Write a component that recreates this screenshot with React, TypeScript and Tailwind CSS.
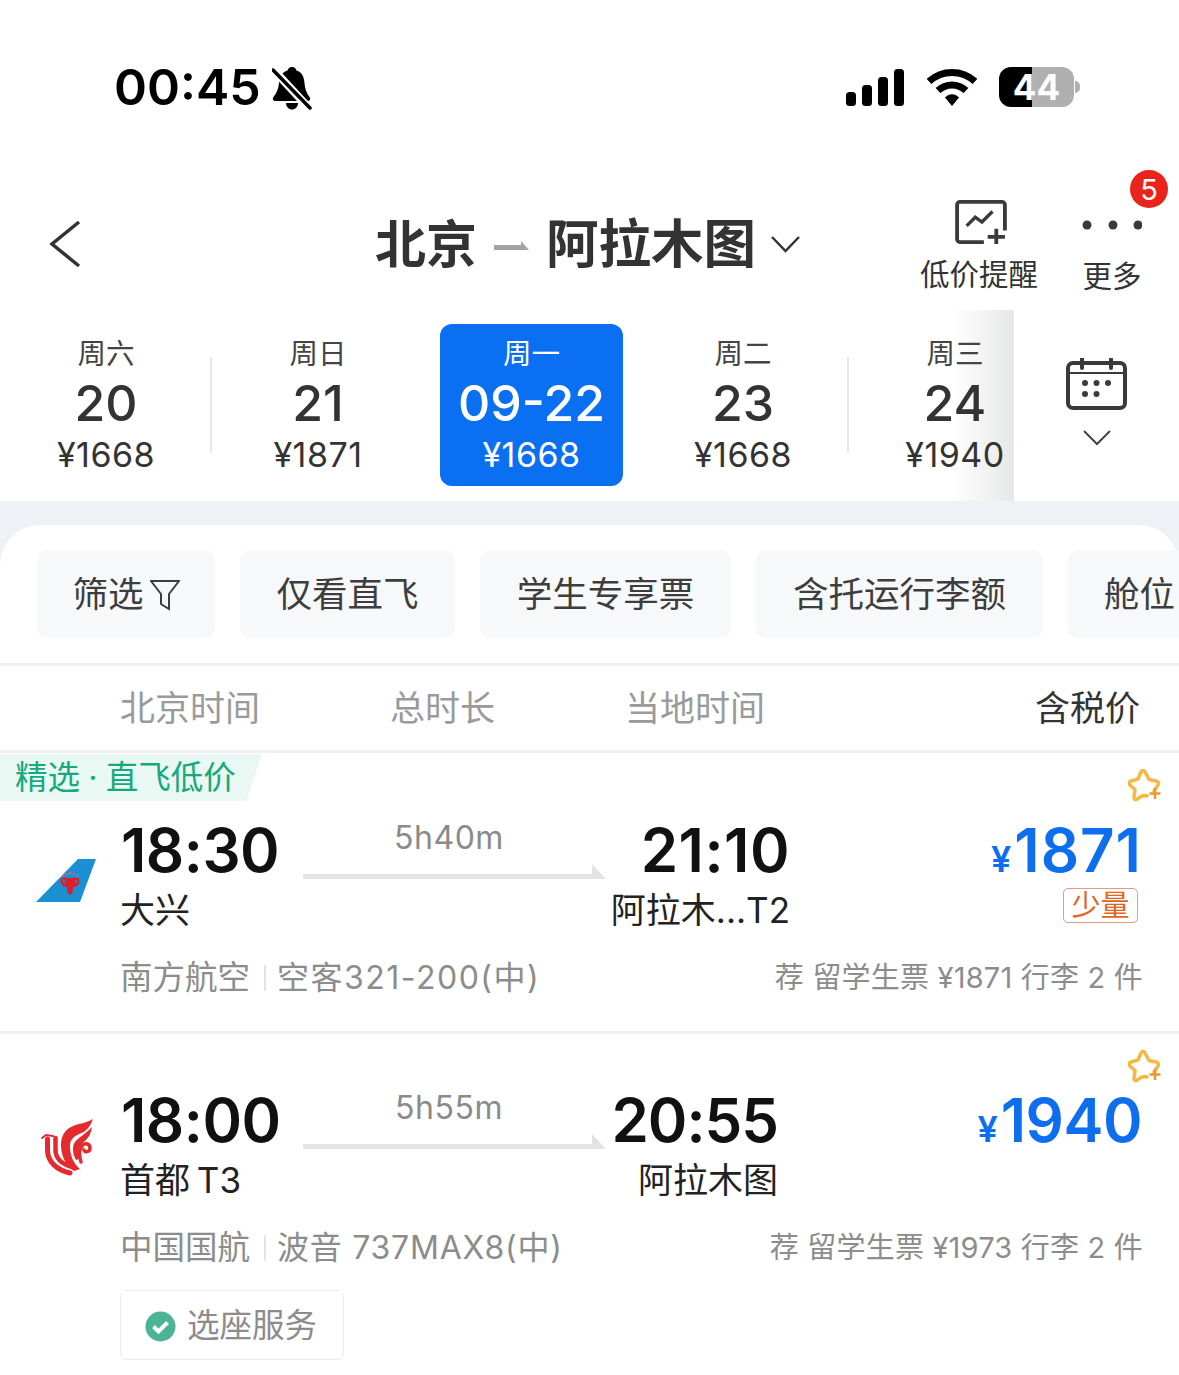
import React from "react";

function BellOff() {
  return (
    <svg width="40" height="43" viewBox="0 0 40 43" className="ml-[11px]">
      <path d="M20 0c3 0 4 2 4.500 3.500C30 5 32 10 32.500 16c.5 6 2 10 5 14 1.500 2 .5 4-2 4H4c-3 0-4-2-2.500-4 3-4 5-8 5.500-14C7.500 10 10 5 15.500 3.500 16 2 17 0 20 0z" fill="#000" />
      <path d="M14 36h12c0 4-3 6.500-6 6.500S14 40 14 36z" fill="#000" />
      <path d="M-2 -1L36 40" stroke="#fff" strokeWidth="8" />
      <path d="M1 3L38 41" stroke="#000" strokeWidth="3.500" strokeLinecap="round" />
    </svg>
  );
}

function Signal() {
  return (
    <svg width="58" height="37" viewBox="0 0 58 37">
      <rect x="0" y="23" width="10" height="14" rx="3.500" fill="#000" />
      <rect x="16" y="16" width="10" height="21" rx="3.500" fill="#000" />
      <rect x="32" y="8" width="10" height="29" rx="3.500" fill="#000" />
      <rect x="48" y="0" width="10" height="37" rx="3.500" fill="#000" />
    </svg>
  );
}

function Wifi() {
  return (
    <svg width="50" height="37" viewBox="0 0 50 37">
      <path d="M2 12.500C15 .5 35 .5 48 12.500" stroke="#000" strokeWidth="7" fill="none" />
      <path d="M11 21.500C19 14 31 14 39 21.500" stroke="#000" strokeWidth="7" fill="none" />
      <path d="M18 28.500C22 24 28 24 32 28.500L25 37z" fill="#000" />
    </svg>
  );
}

function Battery() {
  return (
    <div className="ml-[22px] mt-[-2px] flex h-[40px] w-[82px] items-center">
      <div className="flex h-[40px] w-[75px] items-center justify-center rounded-[12px] bg-[linear-gradient(90deg,#000_44%,#b0b0b0_44%)] text-[35px] font-bold leading-none text-white">
        44
      </div>
      <div className="ml-[1px] h-[12px] w-[5px] rounded-r-full bg-[#b0b0b0]" />
    </div>
  );
}

function DateCell({ w, d, p, sel }: { w: string; d: string; p: string; sel?: boolean }) {
  const box = sel
    ? "ml-[16px] mr-[14px] w-[183px] rounded-[12px] bg-[#0b6ff2] text-white"
    : "w-[212px] text-[#333333]";
  return (
    <div className={"relative flex h-[162px] shrink-0 flex-col items-center " + box}>
      <div className={"mt-[12px] h-[36px] text-[28.500px] leading-[36px] " + (sel ? "text-white" : "text-[#444444]")}>{w}</div>
      <div className="h-[62px] text-[50px] font-medium leading-[62px]">{d}</div>
      <div className="-mt-[2px] text-[34px] leading-[46px] tracking-[0.500px]">{p}</div>
    </div>
  );
}

function Sep() {
  return <div className="-mx-[1px] mt-[33px] h-[96px] w-[2px] shrink-0 -translate-x-[1px] bg-[#e8e8e8]" />;
}

function Chip({ children, w }: { children: React.ReactNode; w: string }) {
  return (
    <div className={"flex h-[88px] shrink-0 items-center justify-center rounded-[10px] bg-[#f7f8fa] pt-[2px] text-[35.500px] text-[#3d3d3d] " + w}>
      {children}
    </div>
  );
}

function Star() {
  return (
    <svg width="36" height="36" viewBox="0 0 36 36">
      <path
        d="M26 23L30 17C31 15 30 13 28 13L21 11.500L17 4C16 2 14 2 13 4L10 11L3 13C1 13.500 1 15.500 2 17L7 21.500L6 29C6 32 8 32 10 30.500C13 28 16 27 19 28"
        fill="none"
        stroke="#f6b843"
        strokeWidth="3.500"
        strokeLinecap="round"
        strokeLinejoin="round"
      />
      <path d="M21.500 25.500h11M27 20v11" stroke="#e39a35" strokeWidth="2.500" />
    </svg>
  );
}

function Arrow() {
  return (
    <svg width="303" height="16" viewBox="0 0 303 16" className="block">
      <path d="M0 10h289V0L303 15H0z" fill="#e3e3e3" />
    </svg>
  );
}

function SouthernLogo() {
  return (
    <svg width="60" height="44" viewBox="0 0 60 44" className="ml-[36px] mt-[43px] shrink-0">
      <path d="M0 44L42 1H60L44 44z" fill="#1a8fd2" />
      <g fill="none" stroke="#d91f2b" strokeLinecap="round">
        <path d="M28 27C24 24 26 19 30 21V28" strokeWidth="2.500" />
        <path d="M40 27C44 24 42 19 38 21V28" strokeWidth="2.500" />
      </g>
      <path d="M31 20h6v11c0 3-1 5-3 6-2-1-3-3-3-6z" fill="#d91f2b" />
      <g fill="#e56a7a">
        <circle cx="34" cy="15" r="1.300" />
        <circle cx="30" cy="16" r="1.100" />
        <circle cx="38" cy="16" r="1.100" />
        <circle cx="27" cy="18" r="1" />
        <circle cx="41" cy="18" r="1" />
      </g>
    </svg>
  );
}

function AirChinaLogo() {
  return (
    <svg width="65" height="70" viewBox="0 0 65 70" className="ml-[35px] mt-[29px] shrink-0">
      <g fill="#e22a2f">
        <path d="M58 5C50 10 43 9 36 13C30 16 26 22 26 31C26 41 30 51 39 57L45 55C38 49 35 41 35 32C35 26 38 23 44 20C51 18 55 13 58 5z" />
        <path d="M57 13C52 18 48 21 44 24C40 27 38 30 38 35C38 39 39 43 41 46L44 45C43 42 43 38 44 35C45 31 48 29 51 26C54 23 56 19 57 13z" />
      </g>
      <g fill="none" stroke="#e22a2f" strokeLinecap="round">
        <path d="M46 48C44 42 44 36 47 32C50 28 55 30 55 34C55 38 50 39 49 36" strokeWidth="3.500" />
        <path d="M12.500 25V36C12.500 48 22 56 35 59" strokeWidth="5" />
        <path d="M20.500 24V36C20.500 44 27 50 37 53" strokeWidth="4.500" />
        <path d="M7 24L11 21L18 22" strokeWidth="2" />
      </g>
    </svg>
  );
}

function Flight(props: {
  pt: string;
  logo: React.ReactNode;
  dep: string;
  depSub: string;
  dur: string;
  arr: string;
  arrSub: string;
  arrW: string;
  arrTrack: string;
  price: string;
  priceTrack: string;
  air: string;
  plane: string;
  planeTrack: string;
  rec: string;
  low?: boolean;
  seat?: boolean;
  tag?: boolean;
  h: string;
}) {
  return (
    <div className={"relative flex " + props.h}>
      {props.tag && (
        <div className="absolute left-0 top-[1px] h-[47px] w-[262px] bg-[#e9f8f3] pl-[15px] text-[32.500px] leading-[47px] text-[#16a97c] [clip-path:polygon(0_0,100%_0,94%_100%,0_100%)] [word-spacing:-1px]">
          精选 · 直飞低价
        </div>
      )}
      <div className="absolute right-[15px] top-[15px]">
        <Star />
      </div>
      <div className={"w-[121px] shrink-0 " + props.pt}>{props.logo}</div>
      <div className={"flex min-w-0 flex-1 flex-col pr-[37px] " + props.pt}>
        <div className="flex">
          <div className="w-[182px] shrink-0">
            <div className="h-[70px] text-[60px] font-semibold leading-[70px] tracking-[-0.500px] text-[#111111]">{props.dep}</div>
            <div className="-ml-[1px] h-[50px] text-[35px] leading-[50px] text-[#222222] [word-spacing:-3px]">{props.depSub}</div>
          </div>
          <div className="flex w-[302px] shrink-0 flex-col">
            <div className="mr-[10px] mt-[3px] h-[40px] text-center text-[32px] leading-[40px] tracking-[0.500px] text-[#8a8a8a]">{props.dur}</div>
            <div className="mt-[6px] self-start">
              <Arrow />
            </div>
          </div>
          <div className={"flex shrink-0 flex-col items-end " + props.arrW}>
            <div className={"h-[70px] text-[60px] font-semibold leading-[70px] text-[#111111] " + props.arrTrack}>{props.arr}</div>
            <div className="h-[50px] whitespace-nowrap text-[35px] leading-[50px] text-[#222222]">{props.arrSub}</div>
          </div>
          <div className="flex flex-1 flex-col items-end">
            <div className="flex h-[70px] items-baseline leading-[70px] text-[#0e6fee]">
              <span className="mr-[3px] text-[36px] font-semibold">¥</span>
              <span className={"text-[60px] font-semibold " + props.priceTrack}>{props.price}</span>
            </div>
            {props.low && (
              <div className="mr-[4px] mt-[3px] flex h-[35px] w-[75px] items-center justify-center rounded-[5px] border border-[#e39a80] text-[29px] leading-none text-[#e0651f]">
                少量
              </div>
            )}
          </div>
        </div>
        <div className="mt-[21px] flex h-[44px] items-center whitespace-nowrap text-[#8c8c8c]">
          <span className="-ml-[1px] text-[32.500px] leading-[44px]">{props.air}</span>
          <span className="ml-[14px] mr-[11px] h-[26px] w-[2px] bg-[#e3e3e3]" />
          <span className={"text-[32px] leading-[44px] " + props.planeTrack}>{props.plane}</span>
          <span className="-mr-[1px] ml-auto text-[29px] leading-[44px] tracking-[0.200px]">{props.rec}</span>
        </div>
        {props.seat && (
          <div className="-ml-[1px] mt-[20px] flex h-[70px] w-[224px] items-center rounded-[6px] border border-[#ececec] pl-[24px] pt-[2px]">
            <svg width="31" height="31" viewBox="0 0 31 31">
              <circle cx="15.500" cy="15.500" r="15" fill="#4cb394" />
              <path d="M8.500 15.500l5 5 9-9" fill="none" stroke="#fff" strokeWidth="4" />
            </svg>
            <span className="ml-[11px] text-[32.500px] leading-none text-[#8c8c8c]">选座服务</span>
          </div>
        )}
      </div>
    </div>
  );
}

export default function App() {
  return (
    <div className="h-[1375px] w-[1179px] overflow-hidden bg-white font-['Inter','Noto_Sans_CJK_SC',sans-serif]">
      {/* status bar */}
      <div className="flex h-[175px] items-start pl-[114px] pr-[98px] pt-[67px]">
        <span className="text-[50px] font-semibold leading-[40px] text-black">00:45</span>
        <BellOff />
        <div className="ml-auto flex items-start pt-[2px]">
          <Signal />
          <div className="ml-[23px]">
            <Wifi />
          </div>
          <Battery />
        </div>
      </div>

      {/* nav */}
      <div className="relative flex h-[135px] items-center">
        <svg width="32" height="48" viewBox="0 0 32 48" className="ml-[49px] mt-[2px]">
          <path d="M30 2L3 24l27 22" fill="none" stroke="#333" strokeWidth="3.500" />
        </svg>
        <div className="ml-[294px] mt-[4px] flex items-center font-bold leading-none text-[#333333]">
          <span className="text-[51px]">北京</span>
          <svg width="35" height="9" viewBox="0 0 35 9" className="mx-[17px] mt-[2px]">
            <path d="M0 4h27V0l8 9H0z" fill="#a3a3a3" />
          </svg>
          <span className="text-[52.500px]">阿拉木图</span>
          <svg width="29" height="17" viewBox="0 0 29 17" className="ml-[15px]">
            <path d="M1 1l13.500 14L28 1" fill="none" stroke="#333" strokeWidth="2.500" />
          </svg>
        </div>
        <div className="absolute left-[920px] top-[25px] flex w-[118px] flex-col items-center">
          <svg width="54" height="44" viewBox="0 0 54 46" className="translate-x-[2px]">
            <path d="M30 44H5a3 3 0 0 1-3-3V5a3 3 0 0 1 3-3h44a3 3 0 0 1 3 3v27" fill="none" stroke="#3a3a3a" strokeWidth="4" />
            <path d="M12 27l9-9 7 5 11-11" fill="none" stroke="#3a3a3a" strokeWidth="3.500" />
            <path d="M34 38.500h18M43 30v17" stroke="#3a3a3a" strokeWidth="4" />
          </svg>
          <span className="mt-[9px] text-[29.500px] leading-[42px] text-[#333333]">低价提醒</span>
        </div>
        <div className="absolute left-[1082px] top-[22px] flex w-[60px] flex-col items-center">
          <svg width="60" height="46" viewBox="0 0 60 46">
            <circle cx="5" cy="28" r="4.500" fill="#3a3a3a" />
            <circle cx="31" cy="28" r="4.500" fill="#3a3a3a" />
            <circle cx="56" cy="28" r="4.500" fill="#3a3a3a" />
          </svg>
          <span className="mt-[12px] text-[29.500px] leading-[42px] text-[#333333]">更多</span>
        </div>
        <div className="absolute left-[1130px] top-[-5px] flex h-[38px] w-[38px] items-center justify-center rounded-full bg-[#ea231b] text-[29px] leading-none text-white">
          5
        </div>
      </div>

      {/* dates */}
      <div className="flex h-[191px]">
        <div className="relative flex h-[191px] w-[1014px] shrink-0 overflow-hidden pt-[14px]">
          <div className="absolute bottom-0 right-0 top-0 w-[60px] bg-gradient-to-r from-transparent to-[#e6e7e8]" />
          <DateCell w="周六" d="20" p="¥1668" />
          <Sep />
          <DateCell w="周日" d="21" p="¥1871" />
          <DateCell w="周一" d="09-22" p="¥1668" sel />
          <DateCell w="周二" d="23" p="¥1668" />
          <Sep />
          <DateCell w="周三" d="24" p="¥1940" />
        </div>
        <div className="flex flex-1 flex-col items-center pl-[2px] pt-[48px]">
          <svg width="62" height="52" viewBox="0 0 62 52" className="-ml-[2px]">
            <rect x="2" y="5" width="57" height="45" rx="5" fill="none" stroke="#3a3a3a" strokeWidth="4" />
            <path d="M2 15h57" stroke="#3a3a3a" strokeWidth="2" />
            <path d="M16 1v9M45 1v9" stroke="#3a3a3a" strokeWidth="4" strokeLinecap="round" />
            <g fill="#3a3a3a">
              <circle cx="19" cy="25" r="3" />
              <circle cx="30.500" cy="25" r="3" />
              <circle cx="42" cy="25" r="3" />
              <circle cx="19" cy="36" r="3" />
              <circle cx="30.500" cy="36" r="3" />
            </g>
          </svg>
          <svg width="28" height="16" viewBox="0 0 28 16" className="-ml-[2px] mt-[20px]">
            <path d="M1 1l13 13L27 1" fill="none" stroke="#444" strokeWidth="2" />
          </svg>
        </div>
      </div>

      {/* sheet */}
      <div className="bg-[#eef1f6] pt-[24px]">
        <div className="rounded-t-[40px] bg-white">
          <div className="flex gap-[25px] overflow-hidden pl-[37px] pt-[25px]">
            <Chip w="w-[178px]">
              <span>筛选</span>
              <svg width="30" height="32" viewBox="0 0 30 32" className="ml-[6px]">
                <path d="M1 2h28L19 15v15l-8-5V15z" fill="none" stroke="#3d3d3d" strokeWidth="2" />
              </svg>
            </Chip>
            <Chip w="w-[215px]">仅看直飞</Chip>
            <Chip w="w-[251px]">学生专享票</Chip>
            <Chip w="w-[287px]">含托运行李额</Chip>
            <Chip w="w-[160px] !justify-start pl-[36px]">舱位</Chip>
          </div>
          <div className="mt-[25px] border-y-[3px] border-[#f0f1f3]">
            <div className="flex h-[84px] items-center text-[35px] leading-none text-[#9a9a9a]">
              <span className="ml-[120px] w-[270px]">北京时间</span>
              <span className="w-[235px]">总时长</span>
              <span>当地时间</span>
              <span className="ml-auto mr-[39px] text-[35px] text-[#333333]">含税价</span>
            </div>
          </div>
          <Flight
            h="h-[281px] border-b-[3px] border-[#f0f1f3]"
            pt="pt-[62px]"
            tag
            logo={<SouthernLogo />}
            dep="18:30"
            depSub="大兴"
            dur="5h40m"
            arr="21:10"
            arrSub="阿拉木...T2"
            arrW="w-[185px]"
            arrTrack="tracking-[0.500px]"
            price="1871"
            priceTrack="tracking-[1px]"
            air="南方航空"
            plane="空客321-200(中)"
            planeTrack="tracking-[1.500px]"
            rec="荐 留学生票 ¥1871 行李 2 件"
            low
          />
          <Flight
            h="h-[340px]"
            pt="pt-[51px]"
            logo={<AirChinaLogo />}
            dep="18:00"
            depSub="首都 T3"
            dur="5h55m"
            arr="20:55"
            arrSub="阿拉木图"
            arrW="w-[173px]"
            arrTrack="tracking-[-1px]"
            price="1940"
            priceTrack="tracking-[-0.500px]"
            air="中国国航"
            plane="波音 737MAX8(中)"
            planeTrack="tracking-[0.750px]"
            rec="荐 留学生票 ¥1973 行李 2 件"
            seat
          />
        </div>
      </div>
    </div>
  );
}
